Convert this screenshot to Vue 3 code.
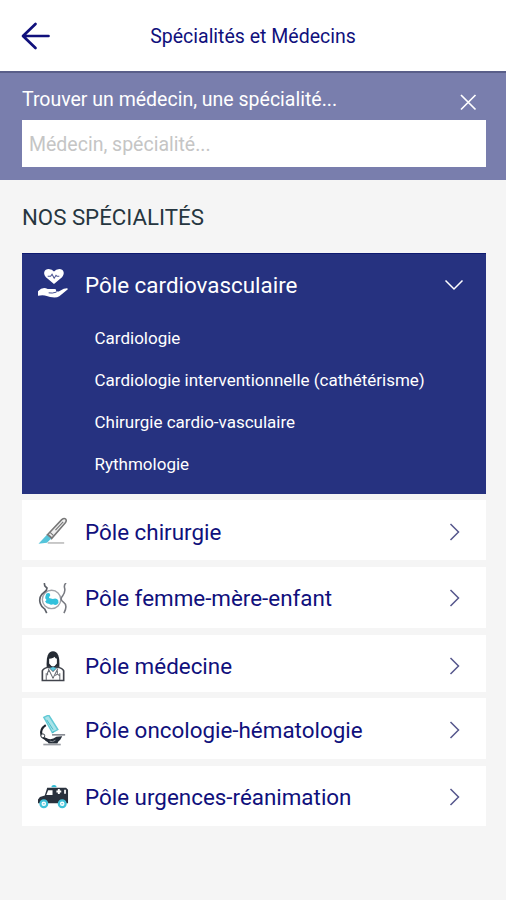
<script setup>
import { ref } from 'vue'

const query = ref('')
const specialities = [
  'Cardiologie',
  'Cardiologie interventionnelle (cathétérisme)',
  'Chirurgie cardio-vasculaire',
  'Rythmologie',
]
const poles = [
  { id: 'surgery', label: 'Pôle chirurgie' },
  { id: 'family', label: 'Pôle femme-mère-enfant' },
  { id: 'medicine', label: 'Pôle médecine' },
  { id: 'oncology', label: 'Pôle oncologie-hématologie' },
  { id: 'emergency', label: 'Pôle urgences-réanimation' },
]
</script>

<template>
  <div class="screen">
    <header class="topbar">
      <svg class="back" viewBox="0 0 30 28" fill="none" stroke="#10107c" stroke-width="2.7" stroke-linecap="round" stroke-linejoin="round">
        <path d="M14.500 2 2 14l12.500 12M2.500 14H27.500" />
      </svg>
      <h1>Spécialités et Médecins</h1>
    </header>

    <section class="search">
      <div class="search-head">
        <label for="q">Trouver un médecin, une spécialité...</label>
        <svg class="close" viewBox="0 0 18 18" fill="none" stroke="#fff" stroke-width="1.700">
          <path d="M2 2l14.500 14.500M16.500 2 2 16.500" />
        </svg>
      </div>
      <input id="q" v-model="query" type="text" placeholder="Médecin, spécialité..." />
    </section>

    <main>
      <h2>NOS SPÉCIALITÉS</h2>
      <section class="open">
        <div class="open-head">
          <svg class="icon" viewBox="0 0 32 32">
            <path d="M16.500 15.500 8.200 8.500C4.700 4.500 6.500 0 11 0q3.700 0 5.500 2.700Q18.500 0 22 0c4.500 0 6.200 4.500 2.800 8.500z" fill="#fff" />
            <path d="M10 7.500h3l1.500-2 2.200 4 1.900-3 1 1H22" fill="none" stroke="#4c5592" stroke-width="1.100" />
            <path d="M0 23q5-5.500 10-2.300h7.200q2.300.3 1.200 2.400h3l5.200-2.600q4.500-1.200 4.200.4-4.200 3.600-8.800 7.100-2 1.300-5 1.300-5 0-8-1.400-3-1.400-9-.4z" fill="#fff" />
            <path d="M11 24.600q3.500.8 8-.7" fill="none" stroke="#263280" stroke-width=".9" />
          </svg>
          <span class="label">Pôle cardiovasculaire</span>
          <svg class="down" viewBox="0 0 20 12" fill="none" stroke="#fff" stroke-width="1.500"><path d="M1.500 1.500 10 10l8.500-8.500" /></svg>
        </div>
        <ul>
          <li v-for="s in specialities" :key="s">{{ s }}</li>
        </ul>
      </section>

      <div v-for="p in poles" :key="p.id" class="row" :class="p.id">
        <svg v-if="p.id === 'surgery'" class="icon" viewBox="0 0 32 32" fill="none">
          <path d="m9.500 18.500 15-15.800q2.500-2.100 4-.6t-.5 4L14 22.300z" fill="#eee" stroke="#777" stroke-width="1.600" />
          <path d="m18 13.500 8-8.500M10.500 18l3.800 3.400M12.500 15.800l3.500 3.400" stroke="#777" stroke-width="1.200" />
          <path d="m9 18.500 4.500 4-4.300 4.200-8.700.8Z" fill="#55c4da" />
          <path d="M10 26.800h17" stroke="#b5b5b5" stroke-width="1.500" />
        </svg>
        <svg v-else-if="p.id === 'family'" class="icon" viewBox="0 0 32 32" fill="none">
          <circle cx="14" cy="17" r="9.500" stroke="#a2a4aa" stroke-width="1.400" />
          <path d="m6.500 0 .5 3 2.300 2.200-.8 2.500-4.500 4Q.5 16 2.500 21.500q1 3.500 4.500 5.500l2 4" stroke="#5c6068" stroke-width="1.700" />
          <path d="M29 0q-2.500 2-1.500 5.500t-2.200 8q-3.300 3.500 1.200 6.500t.3 11" stroke="#777980" stroke-width="1.600" />
          <path d="M8.500 11q2.500-1.500 3.800 0 1 1.700-.5 3l-.5 1.500 4 1q4-1.400 5.600 1.400 1 2.600-1.200 4.300-2 1-4-.2-2.500 1.200-4.400-.7-2.500.4-4-2.300l1.500-1.500q-2-1.500-1.200-3.500z" fill="#32c1dc" />
        </svg>
        <svg v-else-if="p.id === 'medicine'" class="icon" viewBox="0 0 32 32">
          <path d="M9 17Q8 .3 15.500.3T22 17q-2 1-6.500 1t-6.500-1" fill="#252b34" />
          <path d="M11.500 8q4.500-.2 5.500-2 1 2 2.500 2v5q-4 6-8 0z" fill="#fff" />
          <path d="M4.500 30.500V20.500q1-3 7-4l4 4 4-4q6 1 7 4v10z" fill="#fff" stroke="#41444c" stroke-width="1.700" />
          <path d="m10.500 18 5 10 5-10M8.500 23v7M22.500 23v7M11 20q-2 3-1 5M20 20v3.500m-2 2q2-3 4 0" fill="none" stroke="#6b6e75" stroke-width="1.100" />
          <path d="m12 17.500 3.500-1 3.500 1-3.500 3.500z" fill="#58c8e1" />
        </svg>
        <svg v-else-if="p.id === 'oncology'" class="icon" viewBox="0 0 32 32" fill="none">
          <path d="m6 2.500 5-2.500L20.500 15l-5.700 3.200z" fill="#a8e3e8" stroke="#62c9d5" stroke-width="1.500" />
          <path d="m9 5 6.500 10m-1.200 3.500 2.500-1.500" stroke="#40b8c7" />
          <path d="M8 10.500q-6 4-4.500 10 1 3.500 6 5" stroke="#1d242e" stroke-width="2.200" />
          <circle cx="5" cy="21.500" r="2" fill="#fff" stroke="#374049" />
          <path d="M14.500 20.500H28" stroke="#777b84" stroke-width="1.500" />
          <path d="M7.500 23.500q6 3.500 11.500-1l6-.5-2 3.500q-2.500 1.500-3 4h-9q-.5-2-3.500-3z" fill="#252d38" />
          <path d="M12 27q3 1.500 6-1" stroke="#8b9097" />
          <path d="M5.500 30.500h18" stroke="#999ca2" stroke-width="1.700" />
        </svg>
        <svg v-else class="icon" viewBox="0 0 32 32">
          <path d="M14 5.500V4q2.500-2 5 0v1.500z" fill="#32bdd5" />
          <path d="M0 22v-4l2-2.500 5-1.500L9.500 6H29l2 2v14z" fill="#29313d" />
          <path d="m8.500 13.500 2-5H15v5zM19 8.800h1.500V7.300h2v1.500H24v2h-1.500v1.500h-2v-1.500H19zM27 8h1.800v4H27z" fill="#fff" />
          <g fill="#fff" stroke="#40c2d9" stroke-width="2.300"><circle cx="6" cy="22.500" r="3.500" /><circle cx="25" cy="22.500" r="3.500" /></g>
          <path d="M5 22.500h2M24 22.500h2" stroke="#40c2d9" />
        </svg>
        <span class="label">{{ p.label }}</span>
        <svg class="next" viewBox="0 0 12 18" fill="none" stroke="#55568c" stroke-width="1.500"><path d="M1.500 1 9.500 9l-8 8" /></svg>
      </div>
    </main>
  </div>
</template>

<style>
body { background: #f5f5f5; }
</style>

<style scoped>
* { box-sizing: border-box; }
.screen { height: 900px; background: #f5f5f5; font-family: Roboto, sans-serif; color: #10107c; }
.topbar { height: 71px; background: #fff; display: grid; grid-template-columns: 60px 1fr 60px; align-items: center; }
.back { width: 30px; height: 28px; margin-left: 21px; }
h1 { margin: 2px 0 0; font-size: 19.500px; font-weight: 400; line-height: 24px; text-align: center; white-space: nowrap; }
.search { height: 109px; background: #797ead; border-top: 2px solid #595e89; padding: 14px 20px 0 22px; }
.search-head { display: flex; justify-content: space-between; height: 33px; color: #fff; font-size: 19.500px; line-height: 25px; }
.close { width: 18px; height: 18px; margin: 6px 9px 0 0; }
input { display: block; width: 100%; height: 47px; border: 0; border-radius: 0; padding: 1px 7px 0; background: #fff; font: 19.500px Roboto, sans-serif; color: #10107c; outline: none; }
input::placeholder { color: #c5c5c5; opacity: 1; }
main { padding: 24px 20px 0 22px; }
h2 { margin: 0 0 22px; font-size: 22.250px; line-height: 27px; font-weight: 400; color: #263640; }
.open { height: 241px; background: #263280; color: #fff; border-top: 1px solid #0e1a70; margin-bottom: 6px; }
.open-head, .row { display: flex; align-items: center; padding-left: 16px; }
.open-head { height: 63px; }
.icon { width: 31px; height: 31px; flex: none; }
.open-head .icon { margin-top: -2px; }
.label { flex: 1; margin-left: 16px; font-size: 22.400px; line-height: 28px; margin-top: -2px; white-space: nowrap; }
.down { width: 20px; height: 12px; margin: -2px 22px 0 0; }
.next { width: 12px; height: 18px; margin-right: 25px; }
ul { list-style: none; margin: 0; padding: 0 0 0 72.500px; }
li { height: 42px; line-height: 43px; font-size: 17px; white-space: nowrap; }
.row { background: #fff; height: 60px; margin-bottom: 7px; padding-top: 4px; }
.row .label { margin-top: 0; }
.row.family { height: 61px; padding-top: 1px; }
.row.medicine { height: 57px; padding-top: 5px; margin-bottom: 6px; }
.row.oncology { height: 61px; margin-bottom: 7px; padding-top: 3px; }
.row.emergency { padding-top: 2px; }
</style>
